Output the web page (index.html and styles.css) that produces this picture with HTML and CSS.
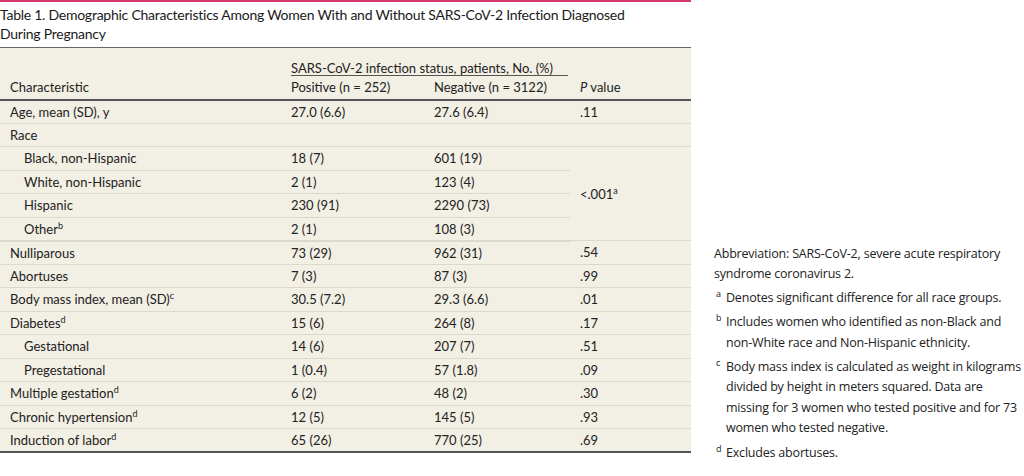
FILE: index.html
```html
<!DOCTYPE html>
<html lang="en">
<head>
<meta charset="utf-8">
<title>Table 1</title>
<link rel="stylesheet" href="styles.css">
</head>
<body>
<div class="page">
  <div class="main">
    <h1 class="title">Table 1. Demographic Characteristics Among Women With and Without SARS-CoV-2 Infection Diagnosed During Pregnancy</h1>
    <table class="data">
      <colgroup>
        <col class="c1"><col class="c2"><col class="c3"><col class="c4">
      </colgroup>
      <thead>
        <tr class="h-span">
          <th></th>
          <th colspan="2" class="span-cell"><span class="span-label">SARS-CoV-2 infection status, patients, No. (%)</span></th>
          <th></th>
        </tr>
        <tr class="h-cols">
          <th>Characteristic</th>
          <th>Positive (n = 252)</th>
          <th>Negative (n = 3122)</th>
          <th><i>P</i> value</th>
        </tr>
      </thead>
      <tbody>
        <tr><td>Age, mean (SD), y</td><td>27.0 (6.6)</td><td>27.6 (6.4)</td><td>.11</td></tr>
        <tr><td>Race</td><td></td><td></td><td></td></tr>
        <tr class="sub"><td class="ind">Black, non-Hispanic</td><td>18 (7)</td><td>601 (19)</td><td rowspan="4" class="merged">&lt;.001<sup>a</sup></td></tr>
        <tr class="sub"><td class="ind">White, non-Hispanic</td><td>2 (1)</td><td>123 (4)</td></tr>
        <tr class="sub"><td class="ind">Hispanic</td><td>230 (91)</td><td>2290 (73)</td></tr>
        <tr class="sub grp-end"><td class="ind">Other<sup>b</sup></td><td>2 (1)</td><td>108 (3)</td></tr>
        <tr><td>Nulliparous</td><td>73 (29)</td><td>962 (31)</td><td>.54</td></tr>
        <tr><td>Abortuses</td><td>7 (3)</td><td>87 (3)</td><td>.99</td></tr>
        <tr><td>Body mass index, mean (SD)<sup>c</sup></td><td>30.5 (7.2)</td><td>29.3 (6.6)</td><td>.01</td></tr>
        <tr><td>Diabetes<sup>d</sup></td><td>15 (6)</td><td>264 (8)</td><td>.17</td></tr>
        <tr><td class="ind">Gestational</td><td>14 (6)</td><td>207 (7)</td><td>.51</td></tr>
        <tr><td class="ind">Pregestational</td><td>1 (0.4)</td><td>57 (1.8)</td><td>.09</td></tr>
        <tr><td>Multiple gestation<sup>d</sup></td><td>6 (2)</td><td>48 (2)</td><td>.30</td></tr>
        <tr><td>Chronic hypertension<sup>d</sup></td><td>12 (5)</td><td>145 (5)</td><td>.93</td></tr>
        <tr><td>Induction of labor<sup>d</sup></td><td>65 (26)</td><td>770 (25)</td><td>.69</td></tr>
      </tbody>
    </table>
  </div>
  <div class="notes">
    <p class="abbr">Abbreviation: SARS-CoV-2, severe acute respiratory syndrome coronavirus 2.</p>
    <p class="fn"><span class="mark">a</span>Denotes significant difference for all race groups.</p>
    <p class="fn"><span class="mark">b</span>Includes women who identified as non-Black and non-White race and Non-Hispanic ethnicity.</p>
    <p class="fn"><span class="mark">c</span>Body mass index is calculated as weight in kilograms divided by height in meters squared. Data are missing for 3 women who tested positive and for 73 women who tested negative.</p>
    <p class="fn"><span class="mark">d</span>Excludes abortuses.</p>
  </div>
</div>
</body>
</html>
```

FILE: styles.css
```css
* { box-sizing: border-box; }
html, body { margin: 0; padding: 0; background: #fff; }
body { font-family: "Lato", "Open Sans", sans-serif; color: #222; }

.page {
  display: flex;
  align-items: flex-end;
  width: 1024px;
  height: 476px;
  padding-bottom: 13px;
}

.main {
  width: 691px;
  flex: none;
  align-self: flex-start;
}

.title {
  margin: 0;
  border-top: 2px solid #d4376f;
  padding: 3px 30px 0 0;
  font-size: 14px;
  line-height: 19px;
  letter-spacing: -0.25px;
  font-weight: normal;
  color: #1a1a1a;
  height: 47px;
}

.data {
  width: 691px;
  border-collapse: collapse;
  background: #f2efe4;
  font-size: 13px;
  border-top: 1px solid #666;
  table-layout: fixed;
}
.c1 { width: 281px; }
.c2 { width: 143px; }
.c3 { width: 146px; }
.c4 { width: 121px; }

.data th, .data td {
  padding: 0 0 0 10px;
  text-align: left;
  font-weight: normal;
  white-space: nowrap;
}
.h-span th { height: 28px; vertical-align: bottom; }
.span-cell { padding-right: 2px !important; }
.span-label {
  display: block;
  border-bottom: 1px solid #555;
  padding-bottom: 0;
  line-height: 14px;
}
.h-cols th { height: 24px; border-bottom: 2px solid #555; }

.data td {
  height: 23.5px;
  border-bottom: 1px solid #dcd8cb;
  line-height: 16px;
}
.data td.ind { padding-left: 24px; }
.data td.merged { vertical-align: middle; }
.grp-end td { border-bottom: 2px solid #dcd8cb; }
.data tbody tr:last-child td { border-bottom: 2px solid #555; }

sup { font-size: 9px; line-height: 0; vertical-align: 5px; }

.notes {
  margin-left: 23px;
  width: 310px;
  flex: none;
  font-family: "Open Sans", "Lato", sans-serif;
  font-size: 12.5px;
  letter-spacing: -0.2px;
  line-height: 20.5px;
  color: #222;
}
.notes p { margin: 3.6px 0 0 0; }
.notes .abbr { margin-top: 0; padding-right: 8px; }
.fn { padding-left: 12px; position: relative; }
.fn .mark {
  position: absolute;
  left: 2px;
  top: -4px;
  font-size: 9px;
}
```
